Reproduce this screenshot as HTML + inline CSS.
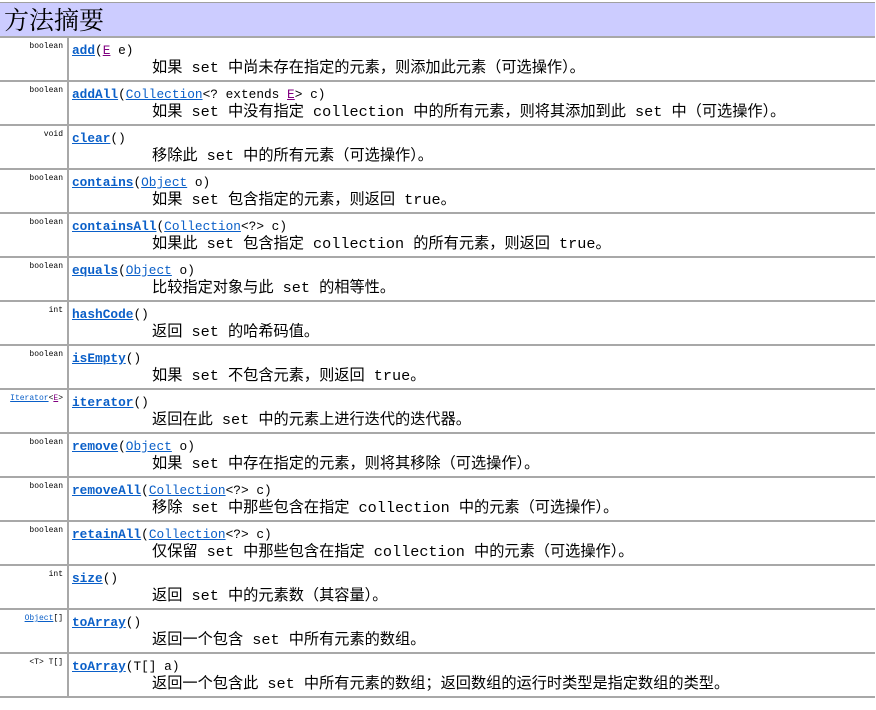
<!DOCTYPE html>
<html><head><meta charset="utf-8"><style>
body{margin:0;width:876px;height:710px;background:#fff;position:relative;overflow:hidden;font-family:"Liberation Mono","Noto Sans CJK SC",monospace;}
.hd{position:absolute;left:0;top:2px;width:875px;height:33px;background:#ccccff;border-top:1px solid #a0a0a0;}
.hd span{position:absolute;left:4px;top:1px;font-family:"Noto Serif CJK SC","Noto Sans CJK SC",serif;font-size:25px;font-weight:normal;line-height:30px;color:#000}
.r{position:absolute;left:0;width:875px;height:42px;border-top:2px solid #a8a8a8;}
.l{position:absolute;left:0;top:0;width:69px;height:42px;border-right:2px solid #a8a8a8;text-align:right;font-size:8px;line-height:10px;padding-top:4px;box-sizing:border-box;padding-right:4px;color:#000}
.m{position:absolute;left:72px;top:6px;font-size:12.8px;line-height:14px;white-space:nowrap;color:#000}
.m b{color:#0a5fc8;text-decoration:underline;}
.m a,.l a{color:#0a5fc8;text-decoration:underline}
.m i,.l i{font-style:normal;color:#800080;text-decoration:underline}
.d{position:absolute;left:152px;top:21px;font-size:15.2px;line-height:18px;white-space:nowrap;font-family:"Liberation Mono","Noto Sans CJK SC","WenQuanYi Zen Hei",monospace;}
.end{position:absolute;left:0;top:696px;width:875px;border-top:2px solid #a8a8a8}
</style></head><body>
<div class="hd"><span>方法摘要</span></div>

<div class="r" style="top:36px"><div class="l">boolean</div><div class="m"><b>add</b>(<i>E</i> e)</div><div class="d">如果 set 中尚未存在指定的元素，则添加此元素（可选操作）。</div></div>
<div class="r" style="top:80px"><div class="l">boolean</div><div class="m"><b>addAll</b>(<a>Collection</a>&lt;? extends <i>E</i>&gt; c)</div><div class="d">如果 set 中没有指定 collection 中的所有元素，则将其添加到此 set 中（可选操作）。</div></div>
<div class="r" style="top:124px"><div class="l">void</div><div class="m"><b>clear</b>()</div><div class="d">移除此 set 中的所有元素（可选操作）。</div></div>
<div class="r" style="top:168px"><div class="l">boolean</div><div class="m"><b>contains</b>(<a>Object</a> o)</div><div class="d">如果 set 包含指定的元素，则返回 true。</div></div>
<div class="r" style="top:212px"><div class="l">boolean</div><div class="m"><b>containsAll</b>(<a>Collection</a>&lt;?&gt; c)</div><div class="d">如果此 set 包含指定 collection 的所有元素，则返回 true。</div></div>
<div class="r" style="top:256px"><div class="l">boolean</div><div class="m"><b>equals</b>(<a>Object</a> o)</div><div class="d">比较指定对象与此 set 的相等性。</div></div>
<div class="r" style="top:300px"><div class="l">int</div><div class="m"><b>hashCode</b>()</div><div class="d">返回 set 的哈希码值。</div></div>
<div class="r" style="top:344px"><div class="l">boolean</div><div class="m"><b>isEmpty</b>()</div><div class="d">如果 set 不包含元素，则返回 true。</div></div>
<div class="r" style="top:388px"><div class="l"><a>Iterator</a>&lt;<i>E</i>&gt;</div><div class="m"><b>iterator</b>()</div><div class="d">返回在此 set 中的元素上进行迭代的迭代器。</div></div>
<div class="r" style="top:432px"><div class="l">boolean</div><div class="m"><b>remove</b>(<a>Object</a> o)</div><div class="d">如果 set 中存在指定的元素，则将其移除（可选操作）。</div></div>
<div class="r" style="top:476px"><div class="l">boolean</div><div class="m"><b>removeAll</b>(<a>Collection</a>&lt;?&gt; c)</div><div class="d">移除 set 中那些包含在指定 collection 中的元素（可选操作）。</div></div>
<div class="r" style="top:520px"><div class="l">boolean</div><div class="m"><b>retainAll</b>(<a>Collection</a>&lt;?&gt; c)</div><div class="d">仅保留 set 中那些包含在指定 collection 中的元素（可选操作）。</div></div>
<div class="r" style="top:564px"><div class="l">int</div><div class="m"><b>size</b>()</div><div class="d">返回 set 中的元素数（其容量）。</div></div>
<div class="r" style="top:608px"><div class="l"><a>Object</a>[]</div><div class="m"><b>toArray</b>()</div><div class="d">返回一个包含 set 中所有元素的数组。</div></div>
<div class="r" style="top:652px"><div class="l">&lt;T&gt; T[]</div><div class="m"><b>toArray</b>(T[] a)</div><div class="d">返回一个包含此 set 中所有元素的数组；返回数组的运行时类型是指定数组的类型。</div></div>
<div class="end"></div>
</body></html>
